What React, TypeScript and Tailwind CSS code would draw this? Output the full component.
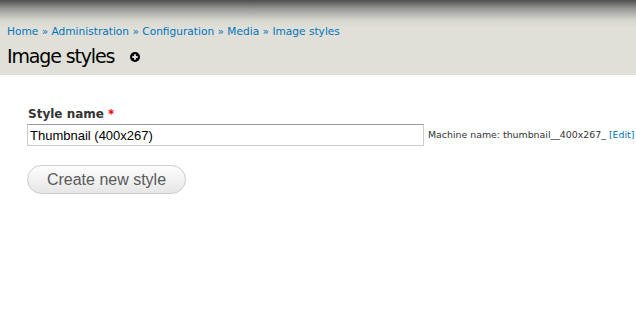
import React from 'react';

const App: React.FC = () => {
  const crumbs = ['Home', 'Administration', 'Configuration', 'Media', 'Image styles'];

  return (
    <div className="w-[636px] h-[334px] bg-white overflow-hidden font-['DejaVu_Sans',sans-serif]">
      {/* header band */}
      <div className="h-[75px] bg-[linear-gradient(to_bottom,#4e4e4e_0px,#9a9a96_9px,#d6d6cf_20px,#e0e0d8_28px)] px-[7px] pt-[24px]">
        <div className="text-[10.6px] leading-[14px] text-[#0074bd]">
          {crumbs.map((c, i) => (
            <span key={c}>
              {i > 0 && <span className="text-[#0074bd]"> » </span>}
              <a href="#">{c}</a>
            </span>
          ))}
        </div>
        <div className="mt-[6px] flex items-center">
          <h1 className="text-[19px] leading-[24px] tracking-[-1.15px] text-black">Image styles</h1>
          <svg className="ml-[16px] mt-[2px]" width="10" height="10" viewBox="0 0 10 10">
            <circle cx="5" cy="5" r="5" fill="#000" />
            <rect x="2.2" y="4.2" width="5.6" height="1.6" fill="#fff" />
            <rect x="4.2" y="2.2" width="1.6" height="5.6" fill="#fff" />
          </svg>
        </div>
      </div>

      {/* form */}
      <div className="px-[27px] pt-[31px]">
        <label className="block pl-[1px] text-[12px] leading-[16px] font-bold text-[#333]">
          Style name <span className="text-[#e00]">*</span>
        </label>
        <div className="mt-[2px] flex items-center">
          <input
            readOnly
            value="Thumbnail (400x267)"
            className="shrink-0 w-[397px] h-[22px] border border-[#ccc] border-t-[#999] bg-white px-[2px] text-[13px] font-['Liberation_Sans',Arial,sans-serif] text-black outline-none"
          />
          <span className="shrink-0 ml-[4px] text-[9.4px] text-[#333] whitespace-nowrap">
            Machine name: thumbnail__400x267_ <a href="#" className="text-[#0074bd]">[Edit]</a>
          </span>
        </div>
        <button className="mt-[19px] w-[159px] h-[29px] rounded-full border border-[#ccc] bg-[linear-gradient(to_bottom,#fdfdfd,#e6e6e6)] text-[16px] text-[#5a5a5a] font-['Liberation_Sans',Arial,sans-serif]">
          Create new style
        </button>
      </div>
    </div>
  );
};

export default App;
